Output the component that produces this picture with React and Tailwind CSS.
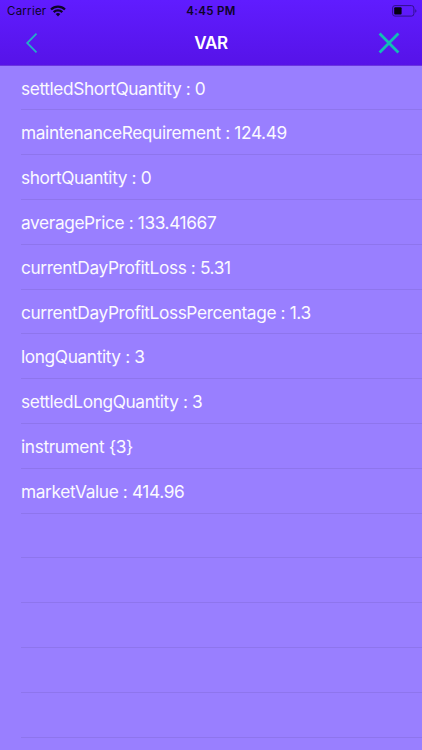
const rows = [
  "settledShortQuantity : 0",
  "maintenanceRequirement : 124.49",
  "shortQuantity : 0",
  "averagePrice : 133.41667",
  "currentDayProfitLoss : 5.31",
  "currentDayProfitLossPercentage : 1.3",
  "longQuantity : 3",
  "settledLongQuantity : 3",
  "instrument {3}",
  "marketValue : 414.96",
  "",
  "",
  "",
  "",
  "",
  "",
];

const WifiIcon = () => (
  <svg width="16" height="12" viewBox="0 0 16 12" fill="#0d0428">
    <path d="M8 11.4 5.7 9a3.3 3.3 0 0 1 4.6 0z" />
    <path d="M4.5 7.9 2.9 6.3a7.2 7.2 0 0 1 10.2 0l-1.6 1.6a5 5 0 0 0-7 0z" />
    <path d="M1.8 5.3.2 3.7a11 11 0 0 1 15.6 0l-1.6 1.6a8.8 8.8 0 0 0-12.4 0z" />
  </svg>
);

const BatteryIcon = () => (
  <svg width="25" height="12" viewBox="0 0 25 12" fill="none">
    <rect x="0.6" y="0.6" width="21.3" height="10.5" rx="2.4" stroke="#31108c" strokeWidth="1" />
    <rect x="2.2" y="2.2" width="7.4" height="7.2" rx="1" fill="#050110" />
    <path d="M23.3 4.2v3.4c.7-.3 1.1-1 1.1-1.7s-.4-1.4-1.1-1.7z" fill="#31108c" />
  </svg>
);

const StatusBar = () => (
  <div className="grid h-[22px] grid-cols-3 items-center text-[11.5px] text-[#0d0428]">
    <div className="flex items-center gap-1 pl-[7px]">
      <span className="pt-0.5 tracking-[0.25px]">Carrier</span>
      <WifiIcon />
    </div>
    <span className="pt-0.5 text-center font-semibold tracking-[0.3px]">4:45 PM</span>
    <div className="flex justify-end pr-[5px]">
      <BatteryIcon />
    </div>
  </div>
);

const NavBar = () => (
  <div className="flex h-[42px] items-center justify-between pr-[22px] pl-[25px]">
    <button aria-label="Back" className="w-[19px]">
      <svg width="14" height="22" viewBox="0 0 14 22" fill="none" stroke="#25adc5" strokeWidth="1.8">
        <path d="M11.5 1.6 2.2 11l9.3 9.4" />
      </svg>
    </button>
    <h1 className="pt-0.5 text-[17px] font-semibold tracking-[-0.3px] text-white">VAR</h1>
    <button aria-label="Close">
      <svg width="22" height="22" viewBox="0 0 22 22" fill="none" stroke="#12bdb5" strokeWidth="2.8">
        <path d="m1.6 1.6 18.8 18.8M20.4 1.6 1.6 20.4" />
      </svg>
    </button>
  </div>
);

export default function App() {
  return (
    <div className="h-[750px] w-full overflow-hidden bg-[#997fff] font-['Inter',sans-serif]">
      <header className="h-[65.7px] border-b border-[#6a35df] bg-linear-to-b from-[#601cff] to-[#5613e8]">
        <StatusBar />
        <NavBar />
      </header>
      <ul>
        {rows.map((row, index) => (
          <li
            key={index}
            className="ml-[21px] flex h-[44.8px] items-center border-b border-[#8e75ed] pt-0.5 text-[17.3px] tracking-[-0.38px] text-[#fbf9ff]"
          >
            {row}
          </li>
        ))}
      </ul>
    </div>
  );
}
